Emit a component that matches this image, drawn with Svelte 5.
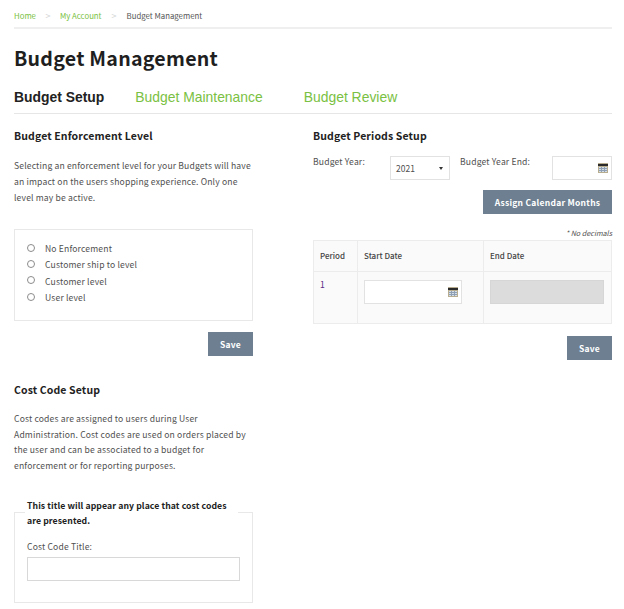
<script>
  const levels = ['No Enforcement', 'Customer ship to level', 'Customer level', 'User level'];
</script>

{#snippet calendar()}
  <svg class="cal" width="10" height="10" viewBox="0 0 10 10" aria-hidden="true">
    <rect x="0" y="0" width="10" height="10" fill="#b8ad8e" />
    <rect x="0" y="1" width="10" height="2" fill="#2b2b2b" />
    <rect x="1" y="4" width="8" height="5" fill="#d5dde6" />
    <path d="M1 5.5h8M1 7.5h8M3.5 4v5M6.5 4v5" stroke="#8fa0b5" stroke-width="1" fill="none" />
  </svg>
{/snippet}

<div class="page">
  <nav class="crumbs">
    <a href="#home">Home</a><span class="sep first-sep">&gt;</span>
    <a href="#account">My Account</a><span class="sep">&gt;</span>
    <span class="current">Budget Management</span>
  </nav>

  <h1>Budget Management</h1>

  <div class="tabs">
    <span class="tab active">Budget Setup</span>
    <a class="tab wide-gap" href="#m">Budget Maintenance</a>
    <a class="tab" href="#r">Budget Review</a>
  </div>

  <div class="cols">
    <section class="left">
      <h2>Budget Enforcement Level</h2>
      <p class="intro">Selecting an enforcement level for your Budgets will have an impact on the users shopping experience. Only one level may be active.</p>

      <div class="box radios">
        {#each levels as level}
          <label class="radio"><span class="dot"></span>{level}</label>
        {/each}
      </div>
      <div class="actions"><button class="btn">Save</button></div>

      <h2 class="cost-head">Cost Code Setup</h2>
      <p class="intro cost">Cost codes are assigned to users during User Administration. Cost codes are used on orders placed by the user and can be associated to a budget for enforcement or for reporting purposes.</p>

      <fieldset class="box code">
        <legend>This title will appear any place that cost codes are presented.</legend>
        <label class="field-label" for="cc">Cost Code Title:</label>
        <input id="cc" class="text" type="text" />
      </fieldset>
    </section>

    <section class="right">
      <h2>Budget Periods Setup</h2>
      <div class="year-row">
        <span class="lbl first">Budget Year:</span>
        <div class="select">2021<span class="caret"></span></div>
        <span class="lbl second">Budget Year End:</span>
        <div class="date small">{@render calendar()}</div>
      </div>
      <div class="assign"><button class="btn wide">Assign Calendar Months</button></div>
      <div class="note">* No decimals</div>

      <table>
        <thead>
          <tr><th class="c1">Period</th><th class="c2">Start Date</th><th>End Date</th></tr>
        </thead>
        <tbody>
          <tr>
            <td class="num">1</td>
            <td><div class="date start">{@render calendar()}</div></td>
            <td><div class="disabled"></div></td>
          </tr>
        </tbody>
      </table>
      <div class="actions save2"><button class="btn">Save</button></div>
    </section>
  </div>
</div>

<style>
  :global(body) {
    margin: 0;
    background: #fff;
  }
  .page {
    box-sizing: border-box;
    width: 624px;
    height: 609px;
    overflow: hidden;
    padding: 0 12px 0 14px;
    font-family: "Noto Sans CJK SC", "Noto Sans", sans-serif;
    font-size: 8.6px;
    color: #505050;
    letter-spacing: 0.15px;
  }
  a {
    text-decoration: none;
    color: #7ac143;
  }
  .crumbs {
    display: flex;
    align-items: center;
    box-sizing: border-box;
    height: 29px;
    padding-top: 3px;
    border-bottom: 2px solid #efefef;
    font-size: 7.8px;
    letter-spacing: 0;
  }
  .sep {
    width: 25px;
    text-align: center;
    color: #d4d4d4;
    font-size: 9px;
  }
  .first-sep {
    width: 24px;
  }
  .current {
    color: #555;
  }
  h1 {
    margin: 13px 0 0;
    font-size: 19.6px;
    line-height: 32px;
    font-weight: 700;
    color: #1f1f1f;
    letter-spacing: 0.25px;
  }
  .tabs {
    display: flex;
    align-items: center;
    gap: 31px;
    margin-top: 10px;
    height: 25px;
    padding-bottom: 4px;
    border-bottom: 1px solid #e6e6e6;
    font-family: "Liberation Sans", Arial, sans-serif;
    font-size: 13.9px;
    letter-spacing: 0;
  }
  .tab {
    color: #7ac143;
  }
  .tab.wide-gap {
    margin-right: 10px;
  }
  .tab.active {
    color: #222;
    font-weight: 700;
  }
  .cols {
    display: flex;
    gap: 60px;
  }
  .left {
    width: 239px;
    flex: none;
  }
  .right {
    width: 299px;
    flex: none;
  }
  h2 {
    margin: 13px 0 0;
    font-size: 10.5px;
    line-height: 17px;
    font-weight: 700;
    color: #222;
    letter-spacing: 0.12px;
  }
  .intro {
    margin: 13px 0 0;
    line-height: 16px;
  }
  .box {
    box-sizing: border-box;
    border: 1px solid #e8e8e8;
  }
  .radios {
    margin-top: 24px;
    height: 92px;
    padding: 10px 12px;
    display: flex;
    flex-direction: column;
  }
  .radio {
    display: flex;
    align-items: center;
    height: 16.3px;
    gap: 10px;
  }
  .dot {
    box-sizing: border-box;
    width: 8px;
    height: 8px;
    border: 1px solid #8c8c8c;
    border-radius: 50%;
    margin-top: -1px;
  }
  .actions {
    display: flex;
    justify-content: flex-end;
    margin-top: 11px;
  }
  .btn {
    box-sizing: border-box;
    height: 24px;
    width: 45px;
    border: 0;
    padding: 0;
    background: #6d7f91;
    color: #fff;
    font: 700 8.5px "Noto Sans CJK SC", "Noto Sans", sans-serif;
    letter-spacing: 0.25px;
  }
  .btn.wide {
    width: 129px;
  }
  .cost-head {
    margin-top: 25px;
  }
  .cost {
    margin-top: 13px;
    line-height: 15.7px;
  }
  .code {
    margin: 24px 0 0;
    padding: 0 12px;
    height: 105px;
    min-width: 0;
  }
  legend {
    box-sizing: border-box;
    width: 213px;
    padding: 0 2px;
    margin-left: -2px;
    font-weight: 700;
    color: #222;
    line-height: 15px;
    letter-spacing: 0.08px;
    font-size: 8.7px;
  }
  .field-label {
    display: block;
    margin-top: 11px;
    line-height: 15px;
  }
  .text {
    display: block;
    box-sizing: border-box;
    width: 213px;
    height: 24px;
    margin-top: 3px;
    border: 1px solid #d8d8d8;
    background: #fff;
  }
  .year-row {
    display: flex;
    align-items: flex-start;
    margin-top: 10px;
    height: 26px;
  }
  .lbl {
    line-height: 14px;
  }
  .lbl.first {
    width: 77px;
  }
  .lbl.second {
    width: 92px;
  }
  .select {
    box-sizing: border-box;
    width: 60px;
    height: 24px;
    margin-top: 2px;
    margin-right: 10px;
    border: 1px solid #e2e2e2;
    padding-left: 5px;
    line-height: 23px;
    font-size: 8.5px;
    letter-spacing: 0;
    position: relative;
  }
  .caret {
    position: absolute;
    right: 6px;
    top: 10px;
    border: 2px solid transparent;
    border-top: 3px solid #333;
    border-bottom: 0;
  }
  .date {
    box-sizing: border-box;
    background: #fff;
    border: 1px solid #e2e2e2;
    display: flex;
    align-items: center;
    justify-content: flex-end;
    padding-right: 3px;
  }
  .date.small {
    width: 60px;
    height: 24px;
    margin-top: 2px;
  }
  .assign {
    display: flex;
    justify-content: flex-end;
    margin-top: 10px;
  }
  .note {
    text-align: right;
    font-style: italic;
    font-size: 7.2px;
    line-height: 12px;
    margin-top: 13px;
    letter-spacing: 0;
  }
  table {
    box-sizing: border-box;
    width: 299px;
    margin-top: 1px;
    border-collapse: collapse;
    table-layout: fixed;
    background: #fafafa;
    border: 1px solid #ececec;
  }
  th,
  td {
    border: 1px solid #ececec;
    text-align: left;
    vertical-align: top;
    padding: 0 6px;
  }
  th {
    height: 28px;
    padding-bottom: 2px;
    vertical-align: middle;
    font-weight: 500;
    font-size: 8px;
    color: #444;
    letter-spacing: 0;
  }
  .c1 {
    width: 31px;
  }
  .c2 {
    width: 113px;
  }
  tbody td {
    height: 43px;
    padding-top: 8px;
  }
  .num {
    color: #5b2a86;
    vertical-align: top;
  }
  tbody td.num {
    padding-top: 6px;
    height: 45px;
  }
  .date.start {
    width: 98px;
    height: 24px;
  }
  .disabled {
    height: 24px;
    width: 114px;
    background: #dcdcdc;
    border: 1px solid #d6d6d6;
    box-sizing: border-box;
  }
  .save2 {
    margin-top: 12px;
  }
  .cal {
    display: block;
  }
</style>
